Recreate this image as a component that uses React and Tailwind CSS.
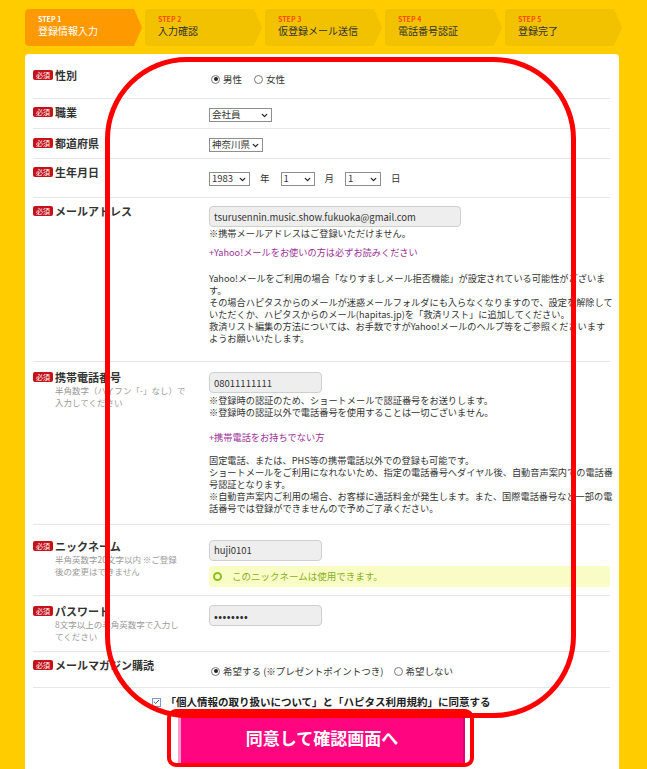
import { ChevronDown, Check } from "lucide-react";

const font = "font-['Noto_Sans_CJK_JP','Noto_Sans',sans-serif]";

const steps = [
  { n: 1, label: "登録情報入力", active: true },
  { n: 2, label: "入力確認" },
  { n: 3, label: "仮登録メール送信" },
  { n: 4, label: "電話番号認証" },
  { n: 5, label: "登録完了" },
];

const Badge = () => (
  <span className="inline-flex items-center justify-center w-[20px] h-[10px] rounded-[2px] bg-[#c4121b] text-white text-[7px] leading-none">
    必須
  </span>
);

const Label = ({ text, sub }) => (
  <div className="w-[176px] shrink-0">
    <div className="flex items-center gap-[2px] h-[14px]">
      <Badge />
      <span className="text-[11px] font-bold leading-[14px] text-[#333]">{text}</span>
    </div>
    {sub && <div className="pl-[22px] text-[8.5px] leading-[12px] text-[#9a9a9a]">{sub}</div>}
  </div>
);

const Select = ({ value, className }) => (
  <div className={`h-[14px] border border-[#8e8e8e] flex items-center justify-between pl-[2px] pr-[2px] text-[9.5px] leading-none text-[#333] bg-white ${className}`}>
    <span>{value}</span>
    <ChevronDown size={9} strokeWidth={3.5} className="text-[#222]" />
  </div>
);

const Radio = ({ checked, label }) => (
  <span className="inline-flex items-center gap-[3px] h-[14px] text-[9.5px] leading-[14px] text-[#333]">
    <span className="w-[9px] h-[9px] rounded-full border border-[#7a7a7a] bg-white flex items-center justify-center">
      {checked && <span className="w-[4px] h-[4px] rounded-full bg-[#222]" />}
    </span>
    {label}
  </span>
);

const Input = ({ value, className }) => (
  <div className={`h-[21px] rounded-[4px] border border-[#cfcfcf] bg-[#eeeeee] flex items-center px-[4px] text-[9.5px] text-[#333] ${className}`}>
    {value}
  </div>
);

export default function App() {
  return (
    <div className={`relative min-h-[769px] bg-[#ffcc00] px-[25px] pt-[9px] overflow-hidden ${font}`}>
      {/* step bar */}
      <div className="flex gap-[3px] h-[37px]">
        {steps.map((s) => (
          <div
            key={s.n}
            className={`w-[117px] rounded-l-[4px] pl-[13px] pt-[6px] [clip-path:polygon(0_0,calc(100%-8px)_0,100%_50%,calc(100%-8px)_100%,0_100%)] ${
              s.active ? "bg-[#ff9900]" : "bg-[#f2c200]"
            }`}
          >
            <div className={`text-[7px] font-bold leading-[9px] ${s.active ? "text-white" : "text-[#ff4e00]"}`}>
              STEP {s.n}
            </div>
            <div className={`text-[10px] leading-[14px] ${s.active ? "text-white" : "text-[#333]"}`}>{s.label}</div>
          </div>
        ))}
      </div>

      {/* form panel */}
      <div className="mt-[8px] w-[594px] bg-white rounded-t-[4px] pl-[8px] pr-[9px] pt-[3px] pb-[10px]">
        {/* 性別 */}
        <div className="flex items-start h-[42px] border-b border-[#e6e6e6]">
          <div className="pt-[11px]"><Label text="性別" /></div>
          <div className="pt-[15px] flex items-center gap-[12px] pl-[2px]">
            <Radio checked label="男性" />
            <Radio label="女性" />
          </div>
        </div>

        {/* 職業 */}
        <div className="flex items-start h-[30px] border-b border-[#e6e6e6]">
          <div className="pt-[6px]"><Label text="職業" /></div>
          <div className="pt-[9px]"><Select value="会社員" className="w-[63px]" /></div>
        </div>

        {/* 都道府県 */}
        <div className="flex items-start h-[30px] border-b border-[#e6e6e6]">
          <div className="pt-[7px]"><Label text="都道府県" /></div>
          <div className="pt-[9px]"><Select value="神奈川県" className="w-[54px]" /></div>
        </div>

        {/* 生年月日 */}
        <div className="flex items-start h-[39px] border-b border-[#e6e6e6]">
          <div className="pt-[6px]"><Label text="生年月日" /></div>
          <div className="pt-[13px] flex items-center text-[9.5px] leading-[14px] text-[#333]">
            <Select value="1983" className="w-[41px]" />
            <span className="ml-[10px] mr-[11px] -mt-[3px]">年</span>
            <Select value="1" className="w-[34px]" />
            <span className="ml-[10px] mr-[11px] -mt-[3px]">月</span>
            <Select value="1" className="w-[36px]" />
            <span className="ml-[10px] -mt-[3px]">日</span>
          </div>
        </div>

        {/* メールアドレス */}
        <div className="flex items-start h-[164px] border-b border-[#e6e6e6]">
          <div className="pt-[6px]"><Label text="メールアドレス" /></div>
          <div className="pt-[8px] text-[9.2px] leading-[12px] text-[#333] whitespace-nowrap">
            <Input value="tsurusennin.music.show.fukuoka@gmail.com" className="w-[252px]" />
            <div>※携帯メールアドレスはご登録いただけません。</div>
            <div className="mt-[7px] text-[#9b2f98]">+Yahoo!メールをお使いの方は必ずお読みください</div>
            <div className="mt-[14px]">
              Yahoo!メールをご利用の場合「なりすましメール拒否機能」が設定されている可能性がございま
              <br />す。
              <br />その場合ハピタスからのメールが迷惑メールフォルダにも入らなくなりますので、設定を解除して
              <br />いただくか、ハピタスからのメール(hapitas.jp)を「救済リスト」に追加してください。
              <br />救済リスト編集の方法については、お手数ですがYahoo!メールのヘルプ等をご参照くださいます
              <br />ようお願いいたします。
            </div>
          </div>
        </div>

        {/* 携帯電話番号 */}
        <div className="flex items-start h-[163px] border-b border-[#e6e6e6]">
          <div className="pt-[8px]">
            <Label
              text="携帯電話番号"
              sub={<>半角数字（ハイフン「-」なし）で<br />入力してください</>}
            />
          </div>
          <div className="pt-[10px] text-[9.2px] leading-[12px] text-[#333] whitespace-nowrap">
            <Input value="08011111111" className="w-[113px]" />
            <div className="mt-[1px]">※登録時の認証のため、ショートメールで認証番号をお送りします。</div>
            <div>※登録時の認証以外で電話番号を使用することは一切ございません。</div>
            <div className="mt-[13px] text-[#9b2f98]">+携帯電話をお持ちでない方</div>
            <div className="mt-[11px]">
              固定電話、または、PHS等の携帯電話以外での登録も可能です。
              <br />ショートメールをご利用になれないため、指定の電話番号へダイヤル後、自動音声案内での電話番
              <br />号認証となります。
              <br />※自動音声案内ご利用の場合、お客様に通話料金が発生します。また、国際電話番号など一部の電
              <br />話番号では登録ができませんので予めご了承ください。
            </div>
          </div>
        </div>

        {/* ニックネーム */}
        <div className="flex items-start h-[71px] border-b border-[#e6e6e6]">
          <div className="pt-[14px]">
            <Label text="ニックネーム" sub={<>半角英数字20文字以内 ※ご登録<br />後の変更はできません</>} />
          </div>
          <div className="pt-[15px] flex-1">
            <Input value="huji0101" className="w-[113px]" />
            <div className="mt-[5px] h-[21px] rounded-[3px] bg-[#fafcc6] flex items-center pl-[4px] gap-[10px] text-[9.5px] text-[#86b01c]">
              <span className="w-[9px] h-[9px] rounded-full border-2 border-[#8cc11f]" />
              このニックネームは使用できます。
            </div>
          </div>
        </div>

        {/* パスワード */}
        <div className="flex items-start h-[56px] border-b border-[#e6e6e6]">
          <div className="pt-[8px]">
            <Label text="パスワード" sub={<>8文字以上の半角英数字で入力し<br />てください</>} />
          </div>
          <div className="pt-[9px]">
            <Input value={<span className="font-bold tracking-[0.5px] text-[10px]">••••••••</span>} className="w-[113px]" />
          </div>
        </div>

        {/* メールマガジン購読 */}
        <div className="flex items-start h-[36px] border-b border-[#e6e6e6]">
          <div className="pt-[6px]"><Label text="メールマガジン購読" /></div>
          <div className="pt-[12px] flex items-center gap-[10px] pl-[2px]">
            <Radio checked label="希望する (※プレゼントポイントつき)" />
            <Radio label="希望しない" />
          </div>
        </div>

        {/* 同意 */}
        <div className="h-[25px] pt-[3px] flex items-center justify-center gap-[4px]">
          <span className="w-[9px] h-[9px] border border-[#7c9ccc] bg-white flex items-center justify-center">
            <Check size={8} strokeWidth={3} className="text-[#333]" />
          </span>
          <span className="text-[10.5px] font-bold text-[#222]">
            「個人情報の取り扱いについて」と「ハピタス利用規約」に同意する
          </span>
        </div>

        <div className="w-[287px] h-[50px] mx-auto bg-[#ff0580] border-l-[3px] border-[#ff99cc] border-r-2 border-r-[#e0006e] flex items-center justify-center text-white text-[17px] font-bold">
          同意して確認画面へ
        </div>
      </div>

      {/* red annotation marks */}
      <div className="absolute left-[105px] top-[57px] w-[471px] h-[661px] border-[5px] border-[#ff0000] rounded-[82px] pointer-events-none" />
      <div className="absolute left-[167px] top-[709px] w-[307px] h-[58px] border-[4px] border-[#ff0000] rounded-[9px] pointer-events-none" />
    </div>
  );
}
